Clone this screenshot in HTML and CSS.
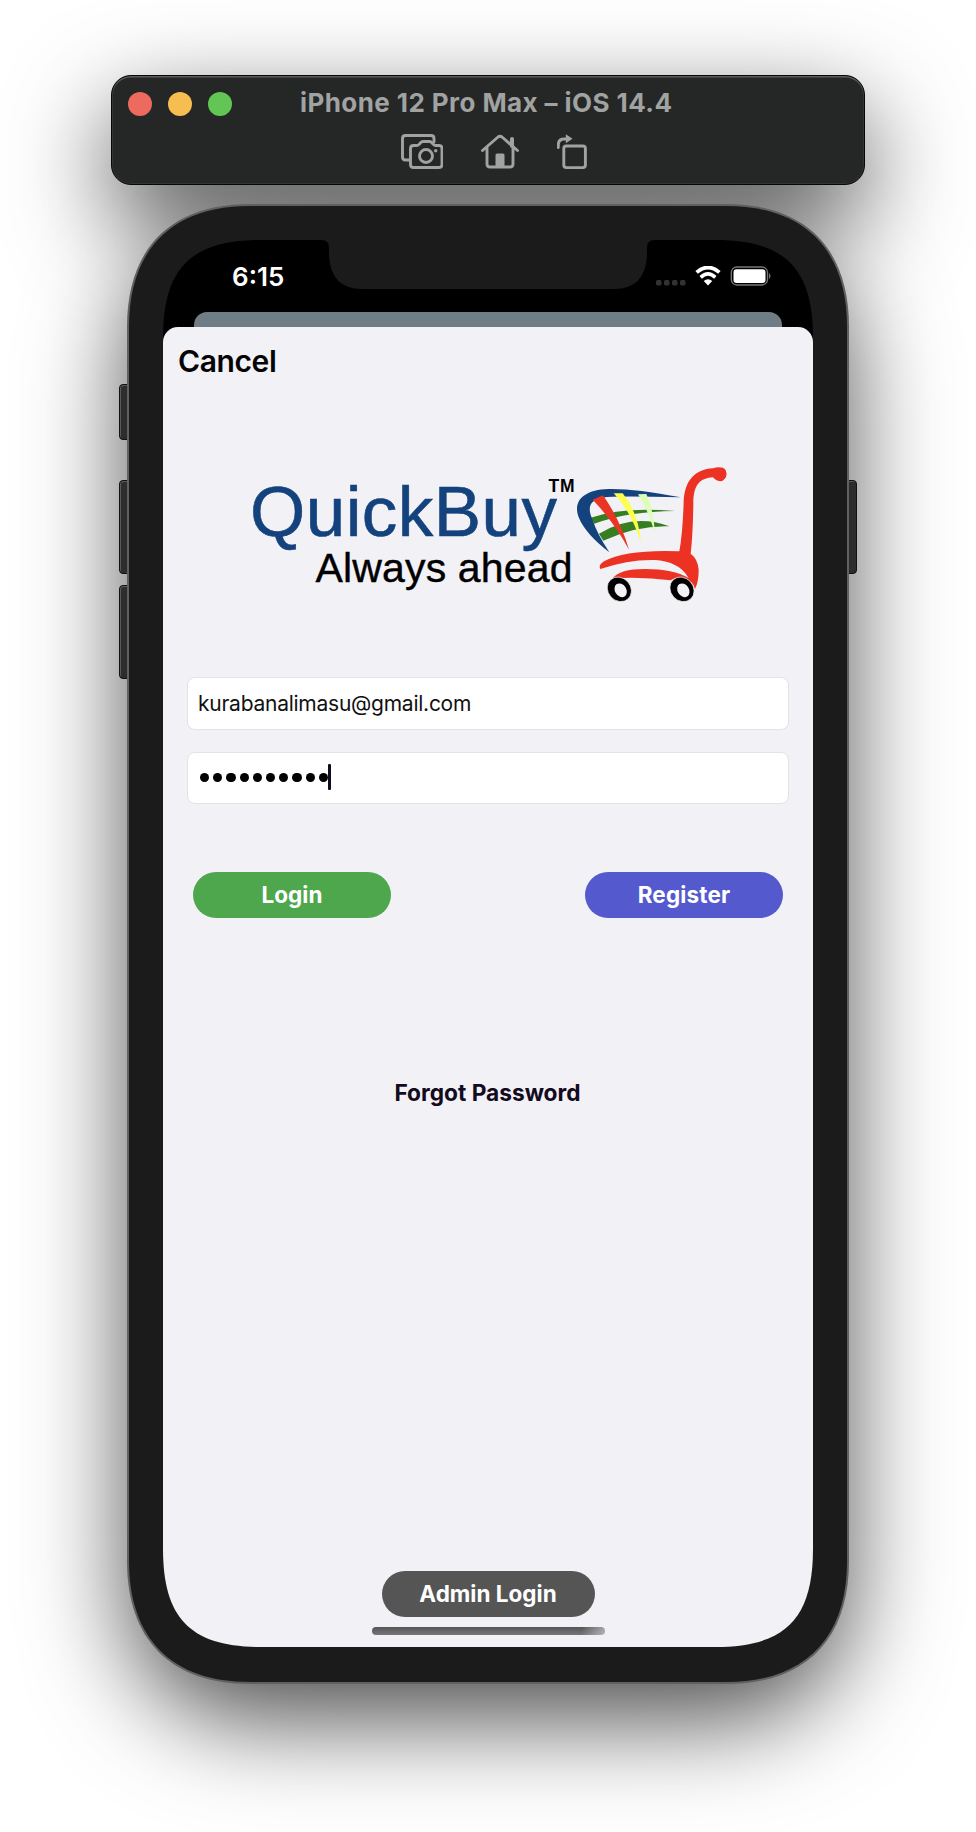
FILE: index.html
```html
<!DOCTYPE html>
<html lang="en">
<head>
<meta charset="utf-8">
<title>iPhone 12 Pro Max – iOS 14.4</title>
<link rel="stylesheet" href="styles.css">
</head>
<body>
<main class="desktop">
  <header class="window-bar">
    <div class="title-row">
      <div class="lights"><i class="light red"></i><i class="light amber"></i><i class="light green"></i></div>
      <h1 class="title">iPhone 12 Pro Max – iOS 14.4</h1>
    </div>
    <nav class="tools">
      <svg class="tool" width="42" height="36" viewBox="0 0 42 36"><path d="M8 26H4.500q-3 0-3-3V4.500q0-3 3-3H30q3 0 3 3V8"/><path d="M12.500 11.500h3.500q1.500 0 2.500-1.500l1-1.200q1-1.300 2.500-1.300h6.500q1.500 0 2.500 1.300l1 1.200q1 1.500 2.500 1.500h3.500q3 0 3 3v16q0 3-3 3h-25.500q-3 0-3-3v-16q0-3 3-3z"/><circle cx="25" cy="22" r="6.500"/><circle class="solid" cx="34.700" cy="16.800" r="1.700"/></svg>
      <svg class="tool" width="38" height="36" viewBox="0 0 38 36"><path d="M1.500 16.500L17 3q2-1.500 4 0L36.500 16.500M6 13.500V30q0 3 3 3h20q3 0 3-3V13.500"/><path d="M31 5v7" stroke-width="4"/><path class="solid" d="M14.500 33V21q0-1.500 1.500-1.500h6q1.500 0 1.500 1.500v12z"/></svg>
      <svg class="tool" width="31" height="36" viewBox="0 0 31 36"><rect x="6.800" y="12" width="21.600" height="21.600" rx="2.500"/><path d="M1.300 13.500V11q0-6 6-6H9"/><path class="solid" d="M8.800 .2l6.800 4.500-6.800 4.600z"/></svg>
    </nav>
  </header>

  <section class="phone">
    <i class="key mute"></i><i class="key vol-up"></i><i class="key vol-down"></i><i class="key power"></i>
    <div class="rim">
    <div class="bezel">
      <div class="screen">
        <svg class="notch" width="334" height="49" viewBox="0 0 334 49"><path d="M0 0C6 0 8 3 8 9V16Q10 49 41 49H293Q324 49 326 16V9C326 3 328 0 334 0z"/></svg>
        <div class="status">
          <span class="time">6:15</span>
          <svg width="118" height="22" viewBox="0 0 118 22">
            <g fill="#333"><rect x="0" y="14" width="5.500" height="5.500" rx="1.700"/><rect x="8" y="14" width="5.500" height="5.500" rx="1.700"/><rect x="16" y="14" width="5.500" height="5.500" rx="1.700"/><rect x="24" y="14" width="5.500" height="5.500" rx="1.700"/></g>
            <g fill="none" stroke="#fff"><path d="M40.600 6.400Q52-3.400 63.400 6.400" stroke-width="3.800"/><path d="M44.700 11.300Q52 4.600 59.300 11.300" stroke-width="3.600"/></g>
            <path d="M47.700 15.100Q52 11.500 56.300 15.100L52 19.600z" fill="#fff"/>
            <rect x="75.300" y="1" width="36.200" height="18" rx="5.500" fill="none" stroke="#777" stroke-width="1.300"/>
            <rect x="77.500" y="3.200" width="32" height="13.800" rx="3" fill="#fff"/>
            <path d="M113 7q3 3 0 6z" fill="#777"/>
          </svg>
        </div>
        <div class="back-sheet"></div>
        <div class="sheet">
          <a class="cancel">Cancel</a>
          <svg class="logo" width="480" height="150" viewBox="0 0 480 150" role="img" aria-label="QuickBuy">
            <text x="0" y="76" class="brand" textLength="307">QuickBuy</text>
            <text x="65.500" y="122" class="tagline" textLength="257">Always ahead</text>
            <text x="298.500" y="32" class="tm" textLength="26">TM</text>
            <g transform="translate(310 -10) scale(.33333)">
              <path fill="#357f20" d="M92 203Q190 169 346 183Q205 184 103 221zM117 251Q220 188 328 229Q230 226 130 272z"/>
              <path fill="#13427d" d="M148 307Q77 253 56 202C38 154 70 119 145 117Q222 115 362 142Q230 138 158 140C90 142 78 166 98 210Q110 249 148 307z"/>
              <path fill="#ea3424" d="M98 149L129 136Q181 210 207 299Q162 216 98 149z"/>
              <path fill="#fdff4f" d="M161 130H188Q235 187 243 278Q213 183 161 130z"/>
              <path fill="#dcffb5" d="M234 133L259 132Q281 180 285 250Q264 178 234 133z"/>
              <path fill="#ec3323" d="M121 357Q114 346 132 334Q200 298 358 304Q368 250 371 155C374 92 404 58 459 55Q474 49 489 53Q501 59 498 74Q494 93 480 94Q467 93 459 82C412 85 401 114 400 158Q399 250 392 311Q414 327 416 360Q416 396 405 417Q400 390 363 384Q343 382 332 391Q250 380 158 385Q178 357 255 357Q340 357 386 384C365 346 326 333 286 330Q210 327 121 357z"/>
              <circle cx="481" cy="73" r="18.500" fill="#ec3323"/>
              <g fill="#000" stroke="#fff" stroke-width="2"><ellipse cx="178" cy="418" rx="34" ry="39" transform="rotate(-42 178 418)"/><ellipse cx="366" cy="418" rx="34" ry="39" transform="rotate(-42 366 418)"/></g>
              <g fill="#f2f1f6"><ellipse cx="182" cy="421" rx="17" ry="22" transform="rotate(-32 182 421)"/><ellipse cx="370" cy="421" rx="17" ry="22" transform="rotate(-32 370 421)"/></g>
            </g>
          </svg>
          <div class="fields">
            <div class="field"><span class="email">kurabanalimasu@gmail.com</span></div>
            <div class="field password"><span class="dots"><i></i><i></i><i></i><i></i><i></i><i></i><i></i><i></i><i></i><i></i></span><i class="caret"></i></div>
          </div>
          <div class="actions"><a class="btn login">Login</a><a class="btn register">Register</a></div>
          <a class="forgot">Forgot Password</a>
          <a class="btn admin">Admin Login</a>
          <div class="home"></div>
        </div>
      </div>
    </div>
    </div>
  </section>
</main>
</body>
</html>
```
FILE: styles.css
```css
* { box-sizing: border-box; }
body { margin: 0; background: #fff; font-family: Inter, sans-serif; }
.desktop { position: relative; z-index: 0; width: 976px; height: 1832px; padding-top: 75px; overflow: hidden; display: flex; flex-direction: column; align-items: center; }

.window-bar { position: relative; width: 754px; height: 110px; border-radius: 20px; background: #252726; border: 1px solid #060606; box-shadow: inset 0 1.500px 0 #5b5d5c, inset 0 0 0 1px #333534; }
.window-bar::before, .phone::before { content: ""; position: absolute; inset: 0; z-index: -1; border-radius: inherit; box-shadow: 0 36px 100px rgba(0,0,0,.7); }
.phone::before { inset: 2px; }
.title-row { display: flex; align-items: center; height: 56px; padding-left: 16px; }
.lights { display: flex; gap: 16px; }
.light { width: 24px; height: 24px; border-radius: 50%; }
.red { background: #ed6a5f; }
.amber { background: #f6be50; }
.green { background: #62c655; }
.title { margin: 0 0 2px 68px; font-size: 26px; line-height: 32px; font-weight: 700; letter-spacing: .42px; color: #a1a2a2; white-space: nowrap; }
.tools { display: flex; gap: 38px; padding: 2px 0 0 289px; }
.tool { fill: none; stroke: #a1a2a2; stroke-width: 2.900; stroke-linecap: round; stroke-linejoin: round; }
.tool .solid { fill: #a1a2a2; stroke: none; }

.phone { position: relative; width: 722px; height: 1482px; margin-top: 18px; border-radius: 122px; }
.rim { width: 722px; height: 1482px; padding: 3px 2px 2px; background: #606060; clip-path: path("M0 124C0 45 44 1 123 1H599C678 1 722 45 722 124V1358C722 1437 678 1481 599 1481H123C44 1481 0 1437 0 1358Z"); }
.bezel { width: 718px; height: 1476px; padding: 34px; background: #1b1b1b; clip-path: path("M0 121C0 43 43 0 121 0H597C675 0 718 43 718 121V1355C718 1433 675 1476 597 1476H121C43 1476 0 1433 0 1355Z"); }
.key { position: absolute; z-index: -1; left: -8px; width: 12px; height: 94px; background: #2d2d2d; border: 1px solid #111; border-radius: 4px; box-shadow: inset 1px 1px 0 #5a5a5a; }
.mute { top: 181px; height: 56px; }
.vol-up { top: 277px; }
.vol-down { top: 382px; }
.power { left: auto; right: -8px; top: 277px; }

.screen { position: relative; width: 650px; height: 1407px; background: #000; display: flex; flex-direction: column; clip-path: path("M0 98C0 28 28 0 98 0H552C622 0 650 28 650 98V1309C650 1379 622 1407 552 1407H98C28 1407 0 1379 0 1309Z"); }
.notch { position: absolute; left: 158px; top: 0; fill: #1b1b1b; }
.status { display: flex; justify-content: space-between; align-items: center; height: 71.500px; padding: 3px 39px 0 69px; }
.time { font-size: 26px; line-height: 30px; font-weight: 600; color: #fff; }
.back-sheet { height: 15px; margin: 0 31px; border-radius: 13px 13px 0 0; background: #6f7d86; }
.sheet { flex: 1; display: flex; flex-direction: column; align-items: stretch; background: #f2f1f6; border-radius: 15px 15px 0 0; }
.cancel { margin: 16.500px 0 0 15px; font-size: 30px; line-height: 36px; font-weight: 630; letter-spacing: -.4px; color: #050505; }
.logo { margin: 81px 0 0 87px; font-family: "Liberation Sans", Arial, sans-serif; }
.brand { font-size: 71px; fill: #13427d; stroke: #13427d; stroke-width: .6; }
.tagline { font-size: 41px; fill: #000; stroke: #000; stroke-width: .4; }
.tm { font-size: 17.500px; font-weight: 700; fill: #000; }
.fields { display: flex; flex-direction: column; gap: 22px; margin: 67px 24px 0; }
.field { height: 53px; display: flex; align-items: center; padding-left: 10px; background: #fff; border: 1px solid #e3e3e6; border-radius: 8px; }
.password { height: 52px; padding-bottom: 1px; }
.email { font-size: 21px; letter-spacing: -.25px; color: #111; }
.dots { display: flex; gap: 4px; padding-left: 2px; }
.dots i { width: 9.200px; height: 9.200px; border-radius: 50%; background: #000; }
.caret { width: 3px; height: 26px; margin: 0 0 2px 0; border-radius: 1px; background: #130b20; }
.actions { display: flex; justify-content: space-between; margin: 68px 30px 0; }
.btn { display: flex; align-items: center; justify-content: center; width: 198px; height: 46px; padding-bottom: 1px; border-radius: 23px; font-size: 22.500px; font-weight: 650; color: #fff; }
.login { background: #4ea64d; }
.register { background: #5459cd; letter-spacing: .15px; }
.forgot { margin-top: 160px; padding-right: 1px; text-align: center; font-size: 22.700px; line-height: 30px; font-weight: 650; color: #130b20; }
.admin { width: 213px; margin: 462.500px auto 0; padding-bottom: 0; background: #555; }
.home { width: 233px; height: 8px; margin: 10px 0 0 209px; border-radius: 4px; background: linear-gradient(90deg, transparent 90%, rgba(242,241,246,.5)), linear-gradient(#555, #77777b); }
```
